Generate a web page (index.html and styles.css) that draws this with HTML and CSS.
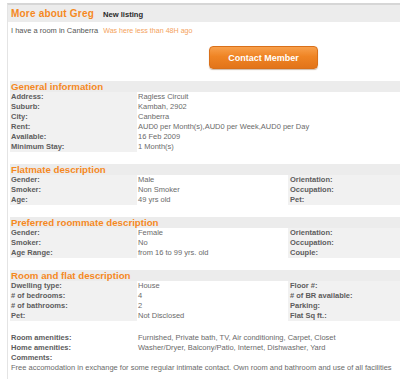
FILE: index.html
```html
<!DOCTYPE html>
<html lang="en">
<head>
    <meta charset="UTF-8"/>
    <title>More about Greg</title>
    <link rel="stylesheet" href="styles.css">
</head>
<body>

<div class="page">
    <header class="profile-head">
        <h1>More about Greg</h1>
        <span class="badge">New listing</span>
    </header>

    <p class="intro">
        I have a room in Canberra
        <span class="last-seen">Was here less than 48H ago</span>
    </p>

    <div class="actions">
        <button class="contact-btn">Contact Member</button>
    </div>

    <section class="block">
        <h2>General information</h2>
        <div class="info-grid">
            <span class="label">Address:</span><span class="value">Ragless Circuit</span><span></span>
            <span class="label">Suburb:</span><span class="value">Kambah, 2902</span><span></span>
            <span class="label">City:</span><span class="value">Canberra</span><span></span>
            <span class="label">Rent:</span><span class="value">AUD0 per Month(s),AUD0 per Week,AUD0 per Day</span><span></span>
            <span class="label">Available:</span><span class="value">16 Feb 2009</span><span></span>
            <span class="label">Minimum Stay:</span><span class="value">1 Month(s)</span><span></span>
        </div>
    </section>

    <section class="block">
        <h2>Flatmate description</h2>
        <div class="info-grid">
            <span class="label">Gender:</span><span class="value">Male</span><span class="label">Orientation:</span>
            <span class="label">Smoker:</span><span class="value">Non Smoker</span><span class="label">Occupation:</span>
            <span class="label">Age:</span><span class="value">49 yrs old</span><span class="label">Pet:</span>
        </div>
    </section>

    <section class="block">
        <h2>Preferred roommate description</h2>
        <div class="info-grid">
            <span class="label">Gender:</span><span class="value">Female</span><span class="label">Orientation:</span>
            <span class="label">Smoker:</span><span class="value">No</span><span class="label">Occupation:</span>
            <span class="label">Age Range:</span><span class="value">from 16 to 99 yrs. old</span><span class="label">Couple:</span>
        </div>
    </section>

    <section class="block">
        <h2>Room and flat description</h2>
        <div class="info-grid">
            <span class="label">Dwelling type:</span><span class="value">House</span><span class="label">Floor #:</span>
            <span class="label"># of bedrooms:</span><span class="value">4</span><span class="label"># of BR available:</span>
            <span class="label"># of bathrooms:</span><span class="value">2</span><span class="label">Parking:</span>
            <span class="label">Pet:</span><span class="value">Not Disclosed</span><span class="label">Flat Sq ft.:</span>
        </div>
    </section>

    <section class="block extras">
        <div class="info-grid plain">
            <span class="label">Room amenities:</span><span class="value">Furnished, Private bath, TV, Air conditioning, Carpet, Closet</span><span></span>
            <span class="label">Home amenities:</span><span class="value">Washer/Dryer, Balcony/Patio, Internet, Dishwasher, Yard</span><span></span>
            <span class="label">Comments:</span><span></span><span></span>
        </div>
        <p class="comment">Free accomodation in exchange for some regular intimate contact. Own room and bathroom and use of all facilities</p>
    </section>
</div>

</body>
</html>
```

FILE: styles.css
```css
:root {
    --orange: #f5891f;
    --band: #ececec;
    --cell: #f1f1f1;
    --label: #5c5c5c;
    --value: #6a6a6a;
}

* {
    margin: 0;
    padding: 0;
    box-sizing: border-box;
}

body {
    font-family: 'Liberation Sans', Arial, sans-serif;
    font-size: 7.5px;
    line-height: 10px;
    color: var(--value);
    background-color: white;
    padding-top: 3px;
    height: 100vh;
    overflow: hidden;
}

.page {
    margin-left: 7px;
    height: 100%;
    border-left: 1px solid #e4e4e4;
    border-top: 2px solid #d6d6d6;
}

.profile-head {
    display: flex;
    align-items: baseline;
    gap: 9px;
    height: 17px;
    padding: 3px 0 0 3px;
    background-color: var(--band);
}

.profile-head h1 {
    font-size: 10px;
    line-height: 12px;
    color: var(--orange);
    letter-spacing: 0.2px;
}

.badge {
    font-size: 7.6px;
    font-weight: bold;
    color: #2a2a2a;
}

.intro {
    padding: 4px 0 0 3px;
    color: #555;
}

.last-seen {
    font-size: 7.1px;
    color: #f4a25c;
    margin-left: 3px;
}

.actions {
    padding: 10px 0 0 201px;
}

.contact-btn {
    width: 109px;
    height: 23px;
    border: 1px solid #d9701a;
    border-radius: 4px;
    background: linear-gradient(#f8a04c, #ef8424 45%, #e2741a);
    box-shadow: 0 1px 1px rgba(120, 60, 10, 0.35);
    color: white;
    font-family: inherit;
    font-size: 9px;
    font-weight: bold;
    cursor: pointer;
}

.block {
    margin: 12px 0 0 2px;
}

.block h2 {
    height: 11px;
    padding-left: 1px;
    font-size: 9.7px;
    line-height: 11px;
    color: var(--orange);
    background-color: var(--band);
}

.info-grid {
    display: grid;
    grid-template-columns: 127px 151px 1fr;
    grid-auto-rows: 10px;
}

.label {
    padding-left: 1px;
    font-weight: bold;
    color: var(--label);
    background-color: var(--cell);
}

.info-grid .label:nth-child(3n) {
    padding-left: 2px;
}

.value {
    padding-left: 1px;
    white-space: nowrap;
}

.plain .label {
    background-color: transparent;
}

.comment {
    padding-left: 1px;
    white-space: nowrap;
}
```
